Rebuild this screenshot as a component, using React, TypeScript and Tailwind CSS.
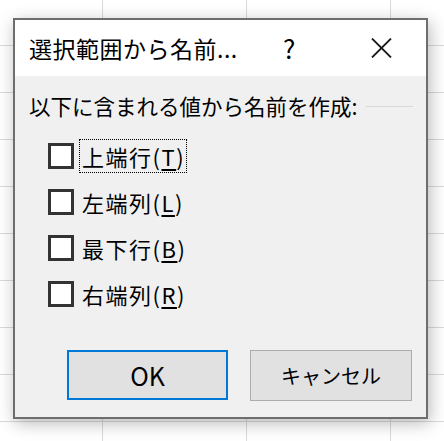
import React from 'react';

// Options shown in the "create names from selection" dialog
const options = [
  { label: '上端行', key: 'T', focused: true },
  { label: '左端列', key: 'L', focused: false },
  { label: '最下行', key: 'B', focused: false },
  { label: '右端列', key: 'R', focused: false },
];

const CheckRow = ({ label, hotkey, focused }: { label: string; hotkey: string; focused: boolean }) => (
  <div className="flex items-center h-[46px]">
    <span className="w-[26px] h-[26px] border-[3px] border-[#333333] bg-white shrink-0" />
    <span
      className={`ml-[6px] pl-[2px] pr-[1px] h-[32px] flex items-center leading-none tracking-[1.5px] text-[22px] ${focused ? 'outline-1 outline-dotted outline-black' : ''}`}
    >
      {label}(<u className="underline-offset-[3px] decoration-[2px]">{hotkey}</u>)
    </span>
  </div>
);

export default function App() {
  return (
    <div
      className="w-[444px] h-[441px] overflow-hidden bg-white pt-[18px] pl-[13px] font-['Noto_Sans_CJK_JP',sans-serif] text-black bg-[linear-gradient(to_right,#dadada_1px,transparent_1px),linear-gradient(to_bottom,#dadada_1px,transparent_1px)] bg-[size:144px_47px] bg-[position:102px_45px]"
    >
      <div className="w-[415px] h-[401px] border-2 border-[#6e6e6e] bg-[#f0f0f0] flex flex-col shadow-[2px_4px_16px_rgba(0,0,0,0.28)]">
        {/* title bar */}
        <div className="h-[56px] bg-white flex items-center pl-[14px] shrink-0">
          <span className="w-[254px] text-[23px] tracking-[0.5px] whitespace-nowrap">選択範囲から名前...</span>
          <span className="w-[12px] text-center text-[26px] leading-none">?</span>
          <svg className="ml-[76px]" width="21" height="20" viewBox="0 0 21 20" fill="none" stroke="#1a1a1a" strokeWidth="1.8">
            <path d="M1 0.5 L20 19.5 M20 0.5 L1 19.5" />
          </svg>
        </div>

        {/* body */}
        <div className="flex-1 flex flex-col pl-[14px] pt-[16px] pb-[16px] pr-[13px]">
          <div className="flex items-center h-[28px]">
            <span className="text-[21.5px] whitespace-nowrap">以下に含まれる値から名前を作成:</span>
            <span className="ml-auto w-[47px] h-px bg-[#d8d8d8] shrink-0" />
          </div>
          <div className="mt-[13px] pl-[19px] flex flex-col">
            {options.map(o => (
              <CheckRow key={o.key} label={o.label} hotkey={o.key} focused={o.focused} />
            ))}
          </div>
          <div className="mt-auto flex justify-end gap-[22px] pr-px">
            <button className="w-[161px] h-[50px] border-2 border-[#0078d7] bg-[#e1e1e1] text-[25px] leading-none">OK</button>
            <button className="w-[162px] h-[51px] border border-[#adadad] bg-[#e1e1e1] text-[20px] leading-none">キャンセル</button>
          </div>
        </div>
      </div>
    </div>
  );
}
